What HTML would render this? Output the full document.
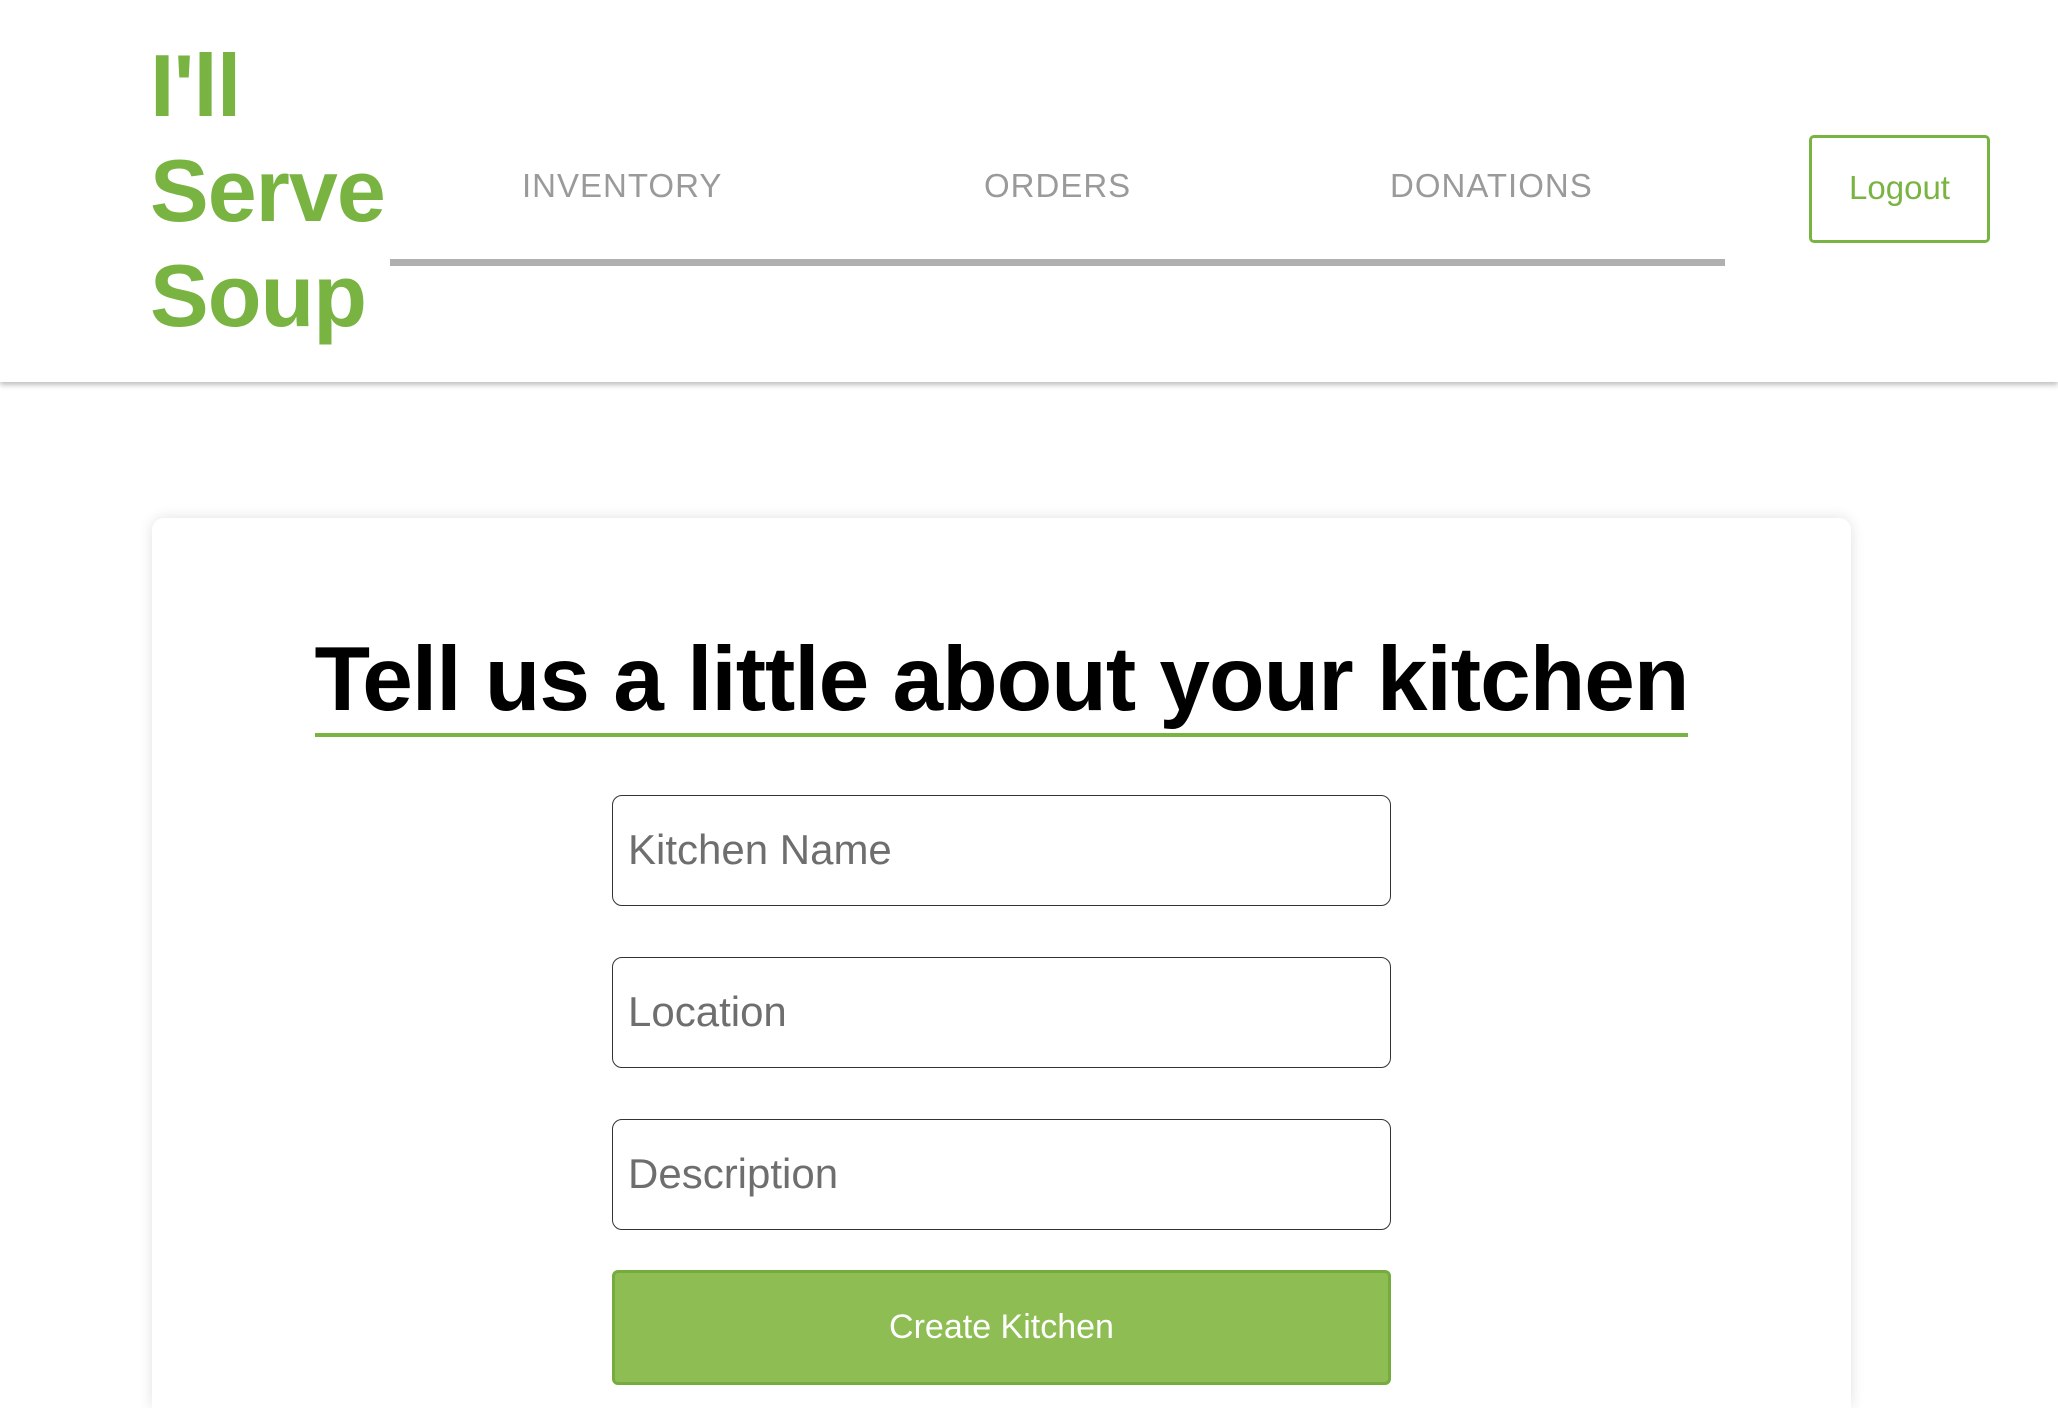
<!DOCTYPE html>
<html><head><style>
*{box-sizing:border-box;margin:0;padding:0}
html,body{width:2058px;height:1408px;overflow:hidden}
body{background:#fff;font-family:"Liberation Sans",sans-serif;position:relative}
.hdr{position:absolute;left:0;top:0;width:2058px;height:382px;background:#fff;box-shadow:0 3px 5px rgba(0,0,0,.25);z-index:2}
.logo{position:absolute;left:150px;top:33px;color:#79b443;font-weight:bold;font-size:88px;line-height:105px;letter-spacing:-1px}
.nav{position:absolute;top:167px;color:#9a9a9a;font-size:33px;letter-spacing:1px}
.bar{position:absolute;left:390px;top:259px;width:1335px;height:7px;background:#b0b0b0}
.logout{position:absolute;left:1809px;top:135px;width:181px;height:108px;border:3px solid #79b443;border-radius:5px;color:#79b443;font-size:33px;text-align:center;line-height:100px}
.card{position:absolute;left:152px;top:518px;width:1699px;height:890px;background:#fff;border-radius:12px 12px 0 0;box-shadow:0 0 14px rgba(0,0,0,.12)}
h1{position:absolute;left:300px;top:625px;width:1403px;text-align:center;font-size:91px;font-weight:bold;color:#000;letter-spacing:-1px;line-height:110px}
.ul{position:absolute;left:315px;top:733px;width:1373px;height:4px;background:#79b443}
.in{position:absolute;left:612px;width:779px;height:111px;border:1.5px solid #333;border-radius:10px;font-size:42px;color:#6e6e6e;padding-left:15px;line-height:108px}
.btn{position:absolute;left:612px;top:1270px;width:779px;height:115px;background:#8dbd53;border:3px solid #74ad3d;border-radius:6px;color:#fff;font-size:34px;text-align:center;line-height:108px}
</style></head><body>
<div class="hdr">
<div class="logo">I'll<br>Serve<br>Soup</div>
<div class="nav" style="left:522px">INVENTORY</div>
<div class="nav" style="left:984px">ORDERS</div>
<div class="nav" style="left:1390px">DONATIONS</div>
<div class="bar"></div>
<div class="logout">Logout</div>
</div>
<div class="card"></div>
<h1>Tell us a little about your kitchen</h1>
<div class="ul"></div>
<div class="in" style="top:795px">Kitchen Name</div>
<div class="in" style="top:957px">Location</div>
<div class="in" style="top:1119px">Description</div>
<div class="btn">Create Kitchen</div>
</body></html>
